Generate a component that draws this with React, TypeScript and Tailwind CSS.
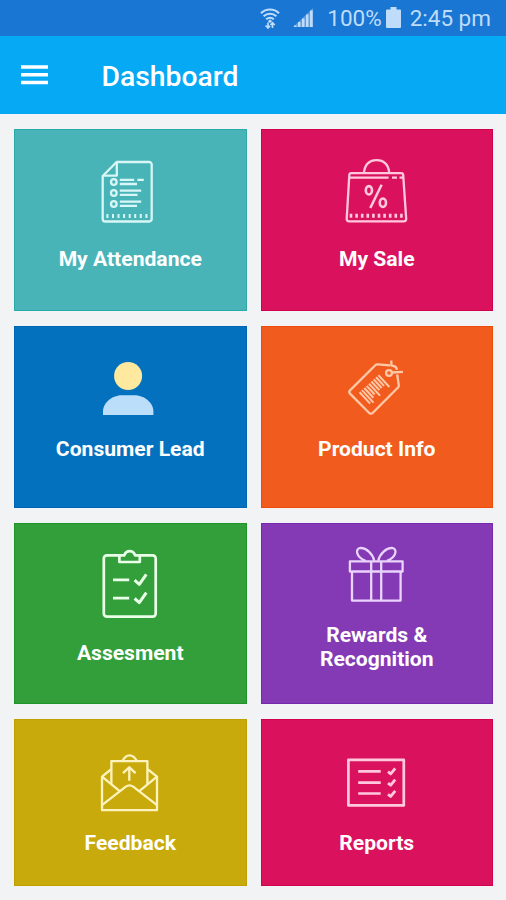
import React from "react"

interface IconProps {
    children?: React.ReactNode
    className?: string
}

interface TileProps {
    label: string
    icon: React.ReactNode
    className: string
    labelClass: string
}

function TileIcon({ children, className = "" }: IconProps) {
    return (
        <svg
            viewBox="0 0 66 70"
            className={`h-[70px] w-[66px] shrink-0 ${className}`}
            fill="none"
            stroke="currentColor"
            strokeWidth="2.3"
            strokeLinejoin="round"
        >
            {children}
        </svg>
    )
}

const AttendanceIcon = () => (
    <TileIcon className="text-[#d8f6f5]">
        <path d="M19.6 5H52.2a2.5 2.5 0 0 1 2.5 2.5V62a2.5 2.5 0 0 1-2.5 2.5H8.2A2.5 2.5 0 0 1 5.7 62V19Z" />
        <path d="M19.8 5.5V18.6H6" />
        {[25, 36, 47].map((y) => (
            <circle key={y} cx="16.8" cy={y} r="2.8" />
        ))}
        <path d="M22.8 22.8H37.2M40.4 22.8H46.8M22.8 27H40M22.8 33.6H44.2M22.8 37.8H40.5M22.8 44.6H44.2M22.8 48.8H40" />
        <path
            d="M10.4 57v4M16 57v4M21.5 57v4M27.1 57v4M32.7 57v4M38.2 57v4M43.8 57v4M49.4 57v4"
            strokeWidth="2"
        />
    </TileIcon>
)

const SaleIcon = () => (
    <TileIcon className="text-[#ffc9dd]">
        <path d="M7.3 16.2H57.2a2 2 0 0 1 2 1.9L62.2 62a2.2 2.2 0 0 1-2.2 2.3H4.9A2.2 2.2 0 0 1 2.7 62L5.3 18.1a2 2 0 0 1 2-1.9Z" />
        <path d="M19.9 15.8C21 7 26 3.2 32.6 3.2S44.2 7 45.3 15.8" />
        <path d="M5.5 20.7H44.6M48 20.7H53M55.5 20.7H59" />
        <ellipse cx="24.9" cy="33.3" rx="3.1" ry="4.2" strokeWidth="2.6" />
        <ellipse cx="38.9" cy="45.7" rx="3.1" ry="4.2" strokeWidth="2.6" />
        <path d="M37.6 27.7L26.3 51" strokeWidth="2.5" />
        <path
            d="M7 56.8v4M12.6 56.8v4M18.2 56.8v4M23.8 56.8v4M29.4 56.8v4M35 56.8v4M40.6 56.8v4M46.2 56.8v4M51.8 56.8v4M57.4 56.8v4"
            strokeWidth="2.6"
        />
    </TileIcon>
)

const ConsumerIcon = () => (
    <TileIcon>
        <circle cx="31.1" cy="22" r="14" fill="#ffe99f" stroke="none" />
        <path
            d="M6 61V57.5C6 48 16 41.3 25 41.3H37.4C46.4 41.3 56.4 48 56.4 57.5V61Z"
            fill="#bbdefb"
            stroke="none"
        />
    </TileIcon>
)

// bar lengths of the barcode printed on the tag
const bars = [10.5, 11.5, 9, 8, 11, 8, 8, 8, 11]

const TagIcon = () => (
    <TileIcon className="text-[#ffc9a8]">
        <path d="M46 11.4L33.8 10.3a3 3 0 0 0-2.5 1L6 36.4a2.3 2.3 0 0 0 0 3.2L25.2 59a2.4 2.4 0 0 0 3.4 0L54 33.5a3 3 0 0 0 .8-2.4L53.2 20.5" />
        <path d="M47.3 6.5V11.4L50.6 12.4Q52.6 13 52.8 15.8" />
        <circle cx="45" cy="19" r="2.9" />
        <path d="M48 18.5L59 17.9" />
        {bars.map((len, i) => (
            <path
                key={i}
                d={`M${15.6 + i * 2.35} ${38.3 - i * 2.15}l${len} ${len * 1.08}`}
                strokeWidth="2"
            />
        ))}
    </TileIcon>
)

const AssesmentIcon = () => (
    <TileIcon className="text-[#e9ffe8]">
        <path
            d="M22.4 6.4H9.8a3 3 0 0 0-3 3V64.6a3 3 0 0 0 3 3H55.7a3 3 0 0 0 3-3V9.4a3 3 0 0 0-3-3H42.8"
            strokeWidth="2.7"
        />
        <path
            d="M22.4 6.4V13H42.8V6.4H38.2C37 3.6 35.2 2.2 32.7 2.2S28.3 3.6 27.2 6.4Z"
            strokeWidth="2.7"
        />
        <path d="M16 30.8H32.2M16 49.2H32.2" strokeWidth="2.7" />
        <path
            d="M37.6 31.2L42.3 35.3L49.3 25.4M37.6 49.5L42.3 53.6L49.3 43.7"
            strokeWidth="3"
        />
    </TileIcon>
)

const GiftIcon = () => (
    <TileIcon className="text-[#ead4fb]">
        <rect x="5.9" y="21.3" width="52.7" height="10.2" />
        <path d="M8 31.5V60.6H56.6V31.5M27.2 21.3V60.6M37.2 21.3V60.6" />
        <path d="M30.2 20.7C29 14 22.5 7.9 16.5 7.9C11 8.3 11.5 17 21.5 20.9" />
        <path d="M34.3 20.7C35.5 14 42 7.9 48 7.9C53.5 8.3 53 17 43 20.9" />
    </TileIcon>
)

const FeedbackIcon = () => (
    <TileIcon className="text-[#fff3bd]">
        <path d="M13.9 21.5L5 28.7V62.2H60V28.7L51 21.5" />
        <path d="M14.4 36V13.2H50.4V36" />
        <path d="M25.5 12.8C27.5 9 29.5 7.3 32.6 7.3S37.7 9 39.7 12.8" />
        <path d="M5 28.7L22.7 43.2M60 28.7L42.3 43.2" />
        <path d="M5 57.2L28.8 38.6Q32.5 36 36.2 38.6L60 57.2" />
        <path d="M32.3 32.7V19.5M26 25.2L32.3 19.3L38.6 25.2" />
    </TileIcon>
)

const ReportsIcon = () => (
    <TileIcon className="text-[#ffc9dd]">
        <rect x="4.4" y="11.8" width="55.4" height="45.6" strokeWidth="2.7" />
        <path
            d="M14.2 23.3H36.7M14.2 34.7H36.7M14.2 45.5H36.7"
            strokeWidth="2.7"
        />
        <path
            d="M44 23.7L46.7 25.8L51.2 20.3M44 35.1L46.7 37.2L51.2 31.7M44 46.3L46.7 48.4L51.2 42.9"
            strokeWidth="2.8"
        />
    </TileIcon>
)

const tiles: TileProps[] = [
    {
        label: "My Attendance",
        icon: <AttendanceIcon />,
        className: "bg-[#48b4b7] border-[#2aa9a8] pt-[27px]",
        labelClass: "mt-5",
    },
    {
        label: "My Sale",
        icon: <SaleIcon />,
        className: "bg-[#da125e] border-[#d3004f] pt-[27px]",
        labelClass: "mt-5",
    },
    {
        label: "Consumer Lead",
        icon: <ConsumerIcon />,
        className: "bg-[#0471bf] border-[#0066b4] pt-[27px]",
        labelClass: "mt-[13px]",
    },
    {
        label: "Product Info",
        icon: <TagIcon />,
        className: "bg-[#f15b1e] border-[#ee4c0b] pt-[27px]",
        labelClass: "mt-[13px]",
    },
    {
        label: "Assesment",
        icon: <AssesmentIcon />,
        className: "bg-[#339f3a] border-[#1f9427] pt-[25px]",
        labelClass: "mt-[22px]",
    },
    {
        label: "Rewards & Recognition",
        icon: <GiftIcon />,
        className: "bg-[#833ab4] border-[#7629ac] pt-4",
        labelClass: "mt-[13px]",
    },
    {
        label: "Feedback",
        icon: <FeedbackIcon />,
        className: "bg-[#c8aa0c] border-[#c09f00] pt-7",
        labelClass: "mt-[13px]",
    },
    {
        label: "Reports",
        icon: <ReportsIcon />,
        className: "bg-[#da125e] border-[#d3004f] pt-7",
        labelClass: "mt-[13px]",
    },
]

function Tile({ label, icon, className, labelClass }: TileProps) {
    return (
        <button
            className={`flex flex-col items-center overflow-hidden border ${className}`}
        >
            {icon}
            <span
                className={`w-[170px] text-center text-[21.1px] leading-6 font-bold text-white ${labelClass}`}
            >
                {label}
            </span>
        </button>
    )
}

function StatusBar() {
    return (
        <div className="flex h-9 items-center justify-end bg-[#1976d2] pt-0.5 pr-[15px] text-[22.5px] text-[#bfdcfb]">
            <svg
                viewBox="0 0 20 21"
                className="mr-[13px] mb-0.5 h-[21px] w-5"
                fill="none"
                stroke="currentColor"
                strokeWidth="2.1"
            >
                <path d="M1 5.2C6 .2 14 .2 19 5.2M3.6 8.3C7.2 4.9 12.8 4.9 16.4 8.3M6.2 11.3C8.4 9.3 11.6 9.3 13.8 11.3" />
                <circle cx="10" cy="13.2" r="1.6" fill="currentColor" stroke="none" />
                <path
                    d="M8 20V14.5M5.6 17.5L8 20L10 17.9M12.5 20V14.7M10.5 17L12.5 14.7L14.8 17"
                    strokeWidth="1.7"
                />
            </svg>
            <svg
                viewBox="0 0 20 20"
                className="mr-[14px] mb-0.5 h-5 w-5"
                fill="currentColor"
            >
                <path d="M0 19L20 0V19Z" opacity=".4" />
                <path d="M1 17.5h2.5V19H1zM5 14h2.5v5H5zM9 10.5h2.5V19H9zM13 6.5h2.5V19H13zM17 2.5h2.7V19H17z" />
            </svg>
            <span>100%</span>
            <svg
                viewBox="0 0 15 21"
                className="mr-[9px] mb-[3px] ml-1 h-[21px] w-[15px]"
                fill="currentColor"
            >
                <path d="M4.5 0h6v2.5H14a1 1 0 0 1 1 1V20a1 1 0 0 1-1 1H1a1 1 0 0 1-1-1V3.5a1 1 0 0 1 1-1H4.5Z" />
            </svg>
            <span>2:45 pm</span>
        </div>
    )
}

export default function App() {
    return (
        <div className="h-[900px] w-[506px] overflow-hidden bg-[#f1f3f4] font-['Roboto','Liberation_Sans',sans-serif]">
            <StatusBar />
            <header className="flex h-[78px] items-center bg-[#06a9f4] pl-[21px]">
                <button className="mb-px" aria-label="Menu">
                    <svg
                        viewBox="0 0 27 20"
                        className="block h-5 w-[27px]"
                        stroke="white"
                        strokeWidth="3.6"
                    >
                        <path d="M0 2H27M0 9.8H27M0 17.5H27" />
                    </svg>
                </button>
                <h1 className="mt-1 ml-[53.5px] text-[28.3px] font-medium text-white">
                    Dashboard
                </h1>
            </header>
            <main className="grid grid-cols-2 grid-rows-[182px_182px_181px_167px] gap-x-[14px] gap-y-[15px] pt-[15px] pr-[13px] pl-[14px]">
                {tiles.map((tile) => (
                    <Tile key={tile.label} {...tile} />
                ))}
            </main>
        </div>
    )
}
